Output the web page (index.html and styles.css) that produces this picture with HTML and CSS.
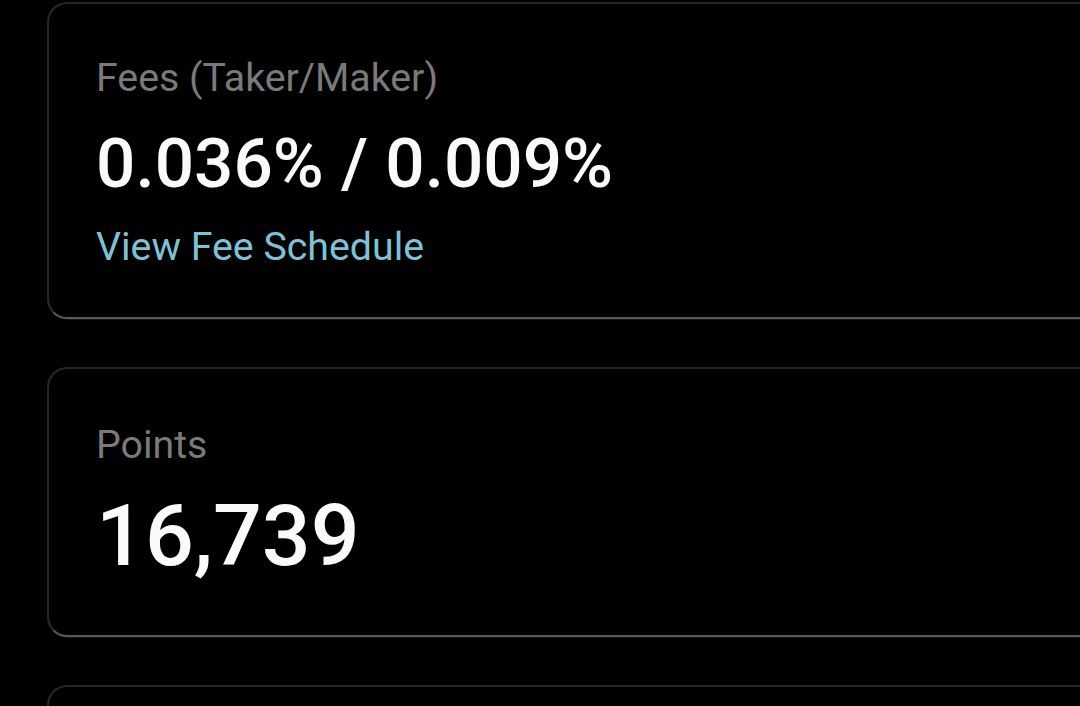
FILE: index.html
```html
<!DOCTYPE html>
<html lang="en">
<head>
<meta charset="utf-8">
<title>Account stats</title>
<link rel="stylesheet" href="styles.css">
</head>
<body>
<main class="stack">
  <section class="card">
    <div class="label">Fees (Taker/Maker)</div>
    <div class="value">0.036% / 0.009%</div>
    <a class="link" href="#">View Fee Schedule</a>
  </section>
  <section class="card card-points">
    <div class="label">Points</div>
    <div class="value value-xl">16,739</div>
  </section>
  <section class="card card-empty"></section>
</main>
</body>
</html>
```

FILE: styles.css
```css
html, body {
  margin: 0;
  padding: 0;
  background: #000;
  overflow: hidden;
  height: 706px;
}

body {
  font-family: Roboto, "Noto Sans", "Liberation Sans", sans-serif;
  color: #fff;
}

.stack {
  width: 1200px;
  padding: 2px 0 0 47px;
  display: flex;
  flex-direction: column;
  gap: 48px;
}

.card {
  border: 2px solid #262626;
  border-bottom: 2px solid transparent;
  border-radius: 20px;
  padding: 52px 48px 48px 47px;
  display: flex;
  flex-direction: column;
  background:
    linear-gradient(#000, #000) padding-box,
    linear-gradient(to bottom, #262626 0%, #262626 80%, #5a5a5a 100%) border-box;
  box-shadow: 0 1px 0 -0.5px rgba(120,120,120,0.35);
}

.card-points {
  padding-top: 54px;
  padding-bottom: 51px;
}

.card-empty {
  height: 120px;
  padding: 0;
}

.label {
  font-size: 39.3px;
  line-height: 44px;
  color: #7a7a7a;
  font-weight: 400;
}

.value {
  font-size: 69.3px;
  line-height: 80px;
  font-weight: 500;
  color: #fafafa;
  margin-top: 24px;
}

.value-xl {
  font-size: 86px;
  line-height: 96px;
  margin-top: 21px;
}

.link {
  font-size: 39.3px;
  line-height: 44px;
  color: #7cc3d6;
  text-decoration: none;
  margin-top: 21px;
  align-self: flex-start;
}
```
